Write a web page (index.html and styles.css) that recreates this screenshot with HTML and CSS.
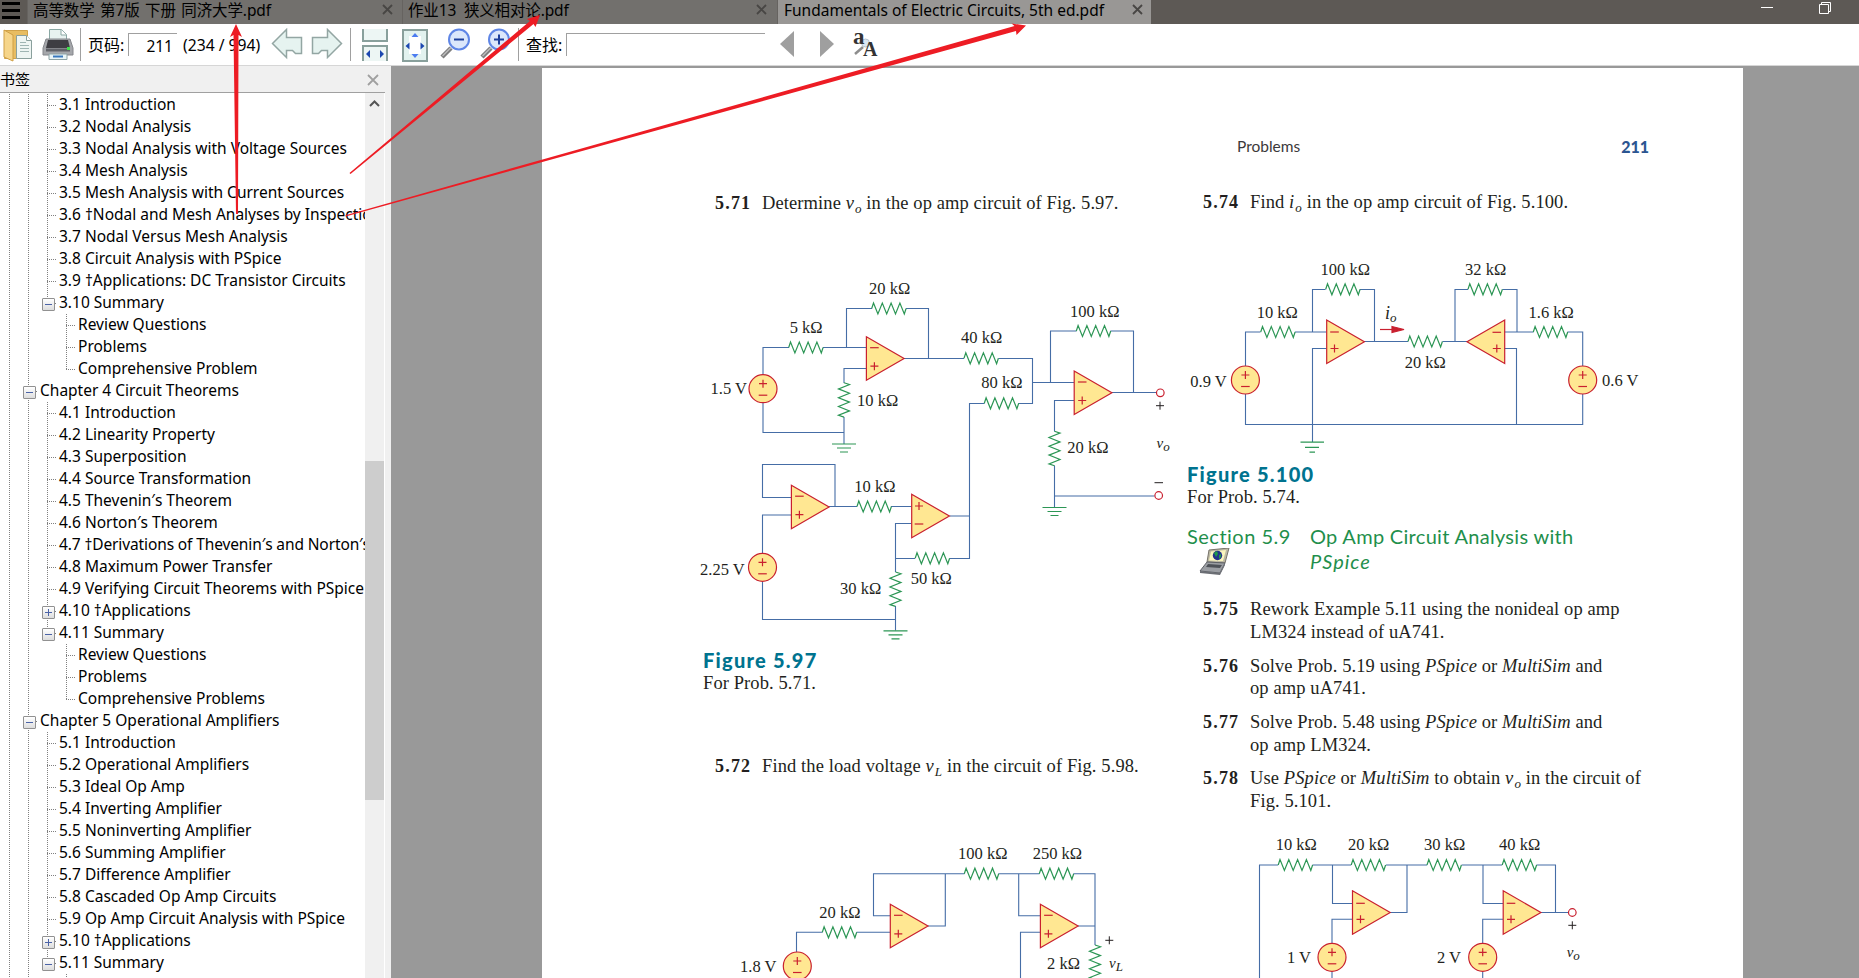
FILE: index.html
```html
<!DOCTYPE html>
<html lang="zh-CN">
<head>
<meta charset="utf-8">
<title>Fundamentals of Electric Circuits, 5th ed.pdf</title>
<link rel="stylesheet" href="styles.css">
</head>
<body>
<div class="app">
  <header class="titlebar">
    <button class="menu" aria-label="Menu"><i></i><i></i><i></i></button>
    <div class="tab tab-1"><span>高等数学 第7版 下册 同济大学.pdf</span><svg class="close" viewBox="0 0 11 11"><path d="M1 1l9 9M10 1l-9 9"/></svg></div>
    <div class="tab tab-2"><span>作业13&nbsp; 狭义相对论.pdf</span><svg class="close" viewBox="0 0 11 11"><path d="M1 1l9 9M10 1l-9 9"/></svg></div>
    <div class="tab tab-3 active"><span>Fundamentals of Electric Circuits, 5th ed.pdf</span><svg class="close" viewBox="0 0 11 11"><path d="M1 1l9 9M10 1l-9 9"/></svg></div>
    <svg class="winbtns" width="82" height="16" viewBox="0 0 82 16"><path d="M0 7.500h12M58.500 4.500h9v9h-9zM60.500 4V2.500h9v9h-2" fill="none" stroke="#fff"/></svg>
  </header>

  <div class="toolbar">
    <svg class="ic-open" width="30" height="34" viewBox="0 0 30 34">
      <path d="M1.500 2.500h23v28h-23z" fill="#e8bd62" stroke="#d0a24a"/>
      <path d="M13.500 7.500h10l5 5v18h-15z" fill="#eef5f3" stroke="#8aa09d"/><path d="M23.500 7.500v5h5" fill="#fff" stroke="#8aa09d"/>
      <path d="M17 14.500h6M17 17.500h9M17 20.500h9M17 23.500h9" stroke="#9fb5b3"/>
      <path d="M1 2l9 5v26l-9-4z" fill="#f6d58a" stroke="#cf9f45"/>
    </svg>
    <svg class="ic-print" width="32" height="34" viewBox="0 0 32 34">
      <path d="M7.500 11V1.500h12l5 5V13" fill="#e8f2f0" stroke="#8aa8a4"/><path d="M19 1.500v5.500h5.500" fill="#fff" stroke="#8aa8a4"/>
      <path d="M4 11h24l3 9v7H1v-7z" fill="#a5a7ab" stroke="#85878c"/>
      <path d="M6 12h20l2 8H4z" fill="#3e3e43"/><path d="M4 20.500h24v3H4z" fill="#606268"/><path d="M25 19h3v3h-3z" fill="#3fe04c"/>
      <path d="M7 26h18v5.500H7z" fill="#e8f5f7" stroke="#8da3a5"/><path d="M11 28.500h10" stroke="#3978bd" stroke-width="2"/>
    </svg>
    <i class="sep sep-1"></i>
    <label class="lbl lbl-page">页码:</label>
    <span class="field field-page">211</span>
    <span class="lbl lbl-total">(234 / 994)</span>
    <svg class="ic-prev" width="32" height="32" viewBox="0 0 32 32"><path d="M1.500 15.500L15.500 1.500v8h15v16h-6l-3-3h-6v7z" fill="#e6f3f0" stroke="#93a6a3" stroke-width="1.500"/></svg>
    <svg class="ic-next" width="32" height="32" viewBox="0 0 32 32"><path d="M30.500 15.500L16.500 1.500v8h-15v16h6l3-3h6v7z" fill="#e6f3f0" stroke="#93a6a3" stroke-width="1.500"/></svg>
    <i class="sep sep-2"></i>
    <svg class="ic-fitw" width="26" height="34" viewBox="0 0 26 34">
      <path d="M1 1v12h24V1M1 33V18h24v15" fill="#edf6f4" stroke="#89a09c" stroke-width="2"/>
      <path d="M4 26l4-4v8zM22 26l-4-4v8z" fill="#1c48b0"/>
    </svg>
    <svg class="ic-fitp" width="26" height="33" viewBox="0 0 26 33">
      <path d="M1 1h24v31H1z" fill="#e2f2ef" stroke="#89a09c" stroke-width="2"/><path d="M7 7h12v18H7z" fill="#fff"/>
      <path d="M13 4l3.500 4h-7zM13 29l3.500-4h-7z" fill="#4c7cf0"/><path d="M3.500 17l4-3.500v7zM22.500 17l-4-3.500v7z" fill="#1c48b0"/>
    </svg>
    <svg class="ic-zout" width="31" height="31" viewBox="0 0 31 31">
      <path d="M2 29L11 20" stroke="#7e7e7e" stroke-width="4.500"/><path d="M2.500 28L11 19.500" stroke="#bcbcbc" stroke-width="1.500"/>
      <circle cx="19" cy="11.500" r="10" fill="#dbe7fb" stroke="#5f86e6" stroke-width="2"/><path d="M14 11.500h10" stroke="#1c3f9c" stroke-width="2"/>
    </svg>
    <svg class="ic-zin" width="31" height="31" viewBox="0 0 31 31">
      <path d="M2 29L11 20" stroke="#7e7e7e" stroke-width="4.500"/><path d="M2.500 28L11 19.500" stroke="#bcbcbc" stroke-width="1.500"/>
      <circle cx="19" cy="11.500" r="10" fill="#dbe7fb" stroke="#5f86e6" stroke-width="2"/><path d="M14 11.500h10M19 6.500v10" stroke="#1c3f9c" stroke-width="2"/>
    </svg>
    <i class="sep sep-3"></i>
    <label class="lbl lbl-find">查找:</label>
    <span class="field field-find"></span>
    <svg class="ic-left" width="14" height="26" viewBox="0 0 14 26"><path d="M14 0v26L0 13z" fill="#9f9f9f"/></svg>
    <svg class="ic-right" width="14" height="26" viewBox="0 0 14 26"><path d="M0 0v26l14-13z" fill="#9f9f9f"/></svg>
    <svg class="ic-case" width="28" height="28" viewBox="0 0 28 28">
      <path d="M2 24l8-7" stroke="#8d8d8d" stroke-width="2.500"/><circle cx="12.500" cy="13" r="4" fill="#d9e6f2" stroke="#b4c3d0"/>
      <text x="0" y="14" font-size="23">a</text><text x="10" y="26" font-size="20">A</text>
    </svg>
  </div>

  <main class="body">
    <aside class="sidebar">
      <div class="side-head"><span>书签</span><svg width="12" height="12" viewBox="0 0 12 12"><path d="M1 1l10 10M11 1L1 11" stroke="#a0a0a0" stroke-width="1.800"/></svg></div>
      <div class="side-body">
        <ul class="tree">
          <li><i class="v"></i><i class="v"></i><i class="v b"></i><span>3.1 Introduction</span></li>
          <li><i class="v"></i><i class="v"></i><i class="v b"></i><span>3.2 Nodal Analysis</span></li>
          <li><i class="v"></i><i class="v"></i><i class="v b"></i><span>3.3 Nodal Analysis with Voltage Sources</span></li>
          <li><i class="v"></i><i class="v"></i><i class="v b"></i><span>3.4 Mesh Analysis</span></li>
          <li><i class="v"></i><i class="v"></i><i class="v b"></i><span>3.5 Mesh Analysis with Current Sources</span></li>
          <li><i class="v"></i><i class="v"></i><i class="v b"></i><span>3.6 †Nodal and Mesh Analyses by Inspection</span></li>
          <li><i class="v"></i><i class="v"></i><i class="v b"></i><span>3.7 Nodal Versus Mesh Analysis</span></li>
          <li><i class="v"></i><i class="v"></i><i class="v b"></i><span>3.8 Circuit Analysis with PSpice</span></li>
          <li><i class="v"></i><i class="v"></i><i class="v b"></i><span>3.9 †Applications: DC Transistor Circuits</span></li>
          <li><i class="v"></i><i class="v"></i><i class="v b end box"></i><span>3.10 Summary</span></li>
          <li><i class="v"></i><i class="v"></i><i></i><i class="v b"></i><span>Review Questions</span></li>
          <li><i class="v"></i><i class="v"></i><i></i><i class="v b"></i><span>Problems</span></li>
          <li><i class="v"></i><i class="v"></i><i></i><i class="v b end"></i><span>Comprehensive Problem</span></li>
          <li><i class="v"></i><i class="v b box"></i><span>Chapter 4 Circuit Theorems</span></li>
          <li><i class="v"></i><i class="v"></i><i class="v b"></i><span>4.1 Introduction</span></li>
          <li><i class="v"></i><i class="v"></i><i class="v b"></i><span>4.2 Linearity Property</span></li>
          <li><i class="v"></i><i class="v"></i><i class="v b"></i><span>4.3 Superposition</span></li>
          <li><i class="v"></i><i class="v"></i><i class="v b"></i><span>4.4 Source Transformation</span></li>
          <li><i class="v"></i><i class="v"></i><i class="v b"></i><span>4.5 Thevenin′s Theorem</span></li>
          <li><i class="v"></i><i class="v"></i><i class="v b"></i><span>4.6 Norton′s Theorem</span></li>
          <li class="tight"><i class="v"></i><i class="v"></i><i class="v b"></i><span>4.7 †Derivations of Thevenin′s and Norton′s</span></li>
          <li><i class="v"></i><i class="v"></i><i class="v b"></i><span>4.8 Maximum Power Transfer</span></li>
          <li><i class="v"></i><i class="v"></i><i class="v b"></i><span>4.9 Verifying Circuit Theorems with PSpice</span></li>
          <li><i class="v"></i><i class="v"></i><i class="v b box plus"></i><span>4.10 †Applications</span></li>
          <li><i class="v"></i><i class="v"></i><i class="v b end box"></i><span>4.11 Summary</span></li>
          <li><i class="v"></i><i class="v"></i><i></i><i class="v b"></i><span>Review Questions</span></li>
          <li><i class="v"></i><i class="v"></i><i></i><i class="v b"></i><span>Problems</span></li>
          <li><i class="v"></i><i class="v"></i><i></i><i class="v b end"></i><span>Comprehensive Problems</span></li>
          <li><i class="v"></i><i class="v b box"></i><span>Chapter 5 Operational Amplifiers</span></li>
          <li><i class="v"></i><i class="v"></i><i class="v b"></i><span>5.1 Introduction</span></li>
          <li><i class="v"></i><i class="v"></i><i class="v b"></i><span>5.2 Operational Amplifiers</span></li>
          <li><i class="v"></i><i class="v"></i><i class="v b"></i><span>5.3 Ideal Op Amp</span></li>
          <li><i class="v"></i><i class="v"></i><i class="v b"></i><span>5.4 Inverting Amplifier</span></li>
          <li><i class="v"></i><i class="v"></i><i class="v b"></i><span>5.5 Noninverting Amplifier</span></li>
          <li><i class="v"></i><i class="v"></i><i class="v b"></i><span>5.6 Summing Amplifier</span></li>
          <li><i class="v"></i><i class="v"></i><i class="v b"></i><span>5.7 Difference Amplifier</span></li>
          <li><i class="v"></i><i class="v"></i><i class="v b"></i><span>5.8 Cascaded Op Amp Circuits</span></li>
          <li><i class="v"></i><i class="v"></i><i class="v b"></i><span>5.9 Op Amp Circuit Analysis with PSpice</span></li>
          <li><i class="v"></i><i class="v"></i><i class="v b box plus"></i><span>5.10 †Applications</span></li>
          <li><i class="v"></i><i class="v"></i><i class="v b end box"></i><span>5.11 Summary</span></li>
          <li><i class="v"></i><i class="v"></i><i></i><i class="v"></i></li>
        </ul>
        <div class="scrollbar"><svg width="11" height="7" viewBox="0 0 11 7"><path d="M1 6l4.500-4.500L10 6" fill="none" stroke="#555" stroke-width="2"/></svg><div class="thumb"></div></div>
      </div>
    </aside>

    <section class="canvas">
      <article class="page">
        <div class="page-head"><span class="running">Problems</span><span class="folio">211</span></div>
        <div class="columns">
          <div class="col">
            <div class="prob"><b>5.71</b><p>Determine <i>v<sub>o</sub></i> in the op amp circuit of Fig. 5.97.</p></div>
            <svg class="fig" width="495" height="434" viewBox="690 214 495 434">
              <defs>
                <path id="r" d="M0 0l1.800-5.500 4.400 11 4.400-11 4.400 11 4.400-11 4.400 11 4.400-11 4.400 11 1.800-5.500"/>
                <path id="tri" d="M0 0v43.500L37.700 21.700z"/>
                <path id="plus" d="M-4 0h8M0-4v8"/>
                <path id="minus" d="M-4.300 0h8.600"/>
                <g id="src"><circle r="14"/><use href="#plus" y="-5"/><use href="#minus" y="6.500"/></g>
                <path id="gnd" d="M-12 0h24M-7 4h14M-4 8h8"/>
                <g id="amp"><use href="#tri"/><use href="#minus" x="8" y="11"/><use href="#plus" x="8" y="29.500"/></g>
              </defs>
              <g class="wire"><path d="M763 374.500v-27h26M823 347.500h43.500M846.500 347.500v-39H872M906 308.500h22.500v50M903.500 358.500h60.500M998.500 358.500h34v45h-14M984.500 403.500h-15v155h-20M866.500 368.500H844v14.500M844 417v27M763 403v29.500h81M1032.500 382.500H1074M1050.500 382.500v-51.500h26M1110.500 331h23v61.500M1111.500 392.500h45M1074 400.500h-19.500v31M1054.500 465.500V507M1054.500 496h100M829 506.500h28M891 506.500h20.500M835 506.500v-42h-72.500v33h29M791 515h-28.500v38M762.500 581.500v38H895.500M911.500 523.500h-16V572M895.500 606v24.500M895.500 558.500H915M949.500 516h20"/></g>
              <g class="res"><use href="#r" x="788.700" y="347.500"/><use href="#r" x="871.700" y="308.500"/><use href="#r" x="964" y="358.300"/><use href="#r" x="984.300" y="403.300"/><use href="#r" x="1076.300" y="331"/><use href="#r" x="857" y="506.500"/><use href="#r" x="915.200" y="558.300"/>
                <use href="#r" transform="translate(844 382.700) rotate(90)"/><use href="#r" transform="translate(1054.500 431.300) rotate(90)"/><use href="#r" transform="translate(895.500 572) rotate(90)"/>
                <use href="#gnd" x="844" y="444"/><use href="#gnd" x="1054.500" y="507.500"/><use href="#gnd" x="895.500" y="630.800"/></g>
              <g class="dev"><use href="#src" x="763" y="388.700"/><use href="#src" x="762.500" y="567.300"/><use href="#amp" x="866.400" y="336.700"/><use href="#amp" x="1074.200" y="371"/><use href="#amp" x="791.400" y="485.200"/>
                <use href="#tri" x="911.700" y="494.300"/><use href="#plus" x="919" y="506"/><use href="#minus" x="919" y="524"/>
                <circle class="term" cx="1160.300" cy="392.800" r="3.800"/><circle class="term" cx="1158.700" cy="495.500" r="3.800"/></g>
              <path class="sign" d="M1156 405.700h8M1160 401.700v8M1154.500 482.700h8.500"/>
              <g class="val"><text x="869" y="294.300">20 kΩ</text><text x="789.700" y="333.300">5 kΩ</text><text x="961" y="343">40 kΩ</text><text x="1070" y="316.700">100 kΩ</text><text x="981.300" y="388.300">80 kΩ</text><text x="857" y="405.700">10 kΩ</text><text x="1067.300" y="453.300">20 kΩ</text><text x="710.500" y="394">1.5 V</text><text x="854.300" y="491.700">10 kΩ</text><text x="700" y="575">2.25 V</text><text x="910.700" y="584">50 kΩ</text><text x="840" y="594">30 kΩ</text>
                <text class="it" x="1156.500" y="448">v<tspan class="sb" dy="3">o</tspan></text></g>
            </svg>
            <div class="cap"><h3>Figure 5.97</h3><p>For Prob. 5.71.</p></div>
            <div class="prob p72"><b>5.72</b><p>Find the load voltage <i>v<sub>L</sub></i> in the circuit of Fig. 5.98.</p></div>
            <svg class="fig" width="495" height="201" viewBox="690 777 495 201">
              <g class="wire"><path d="M890 915.700h-16.500v-42h91M998.500 873.700h41M1073.500 873.700H1095V945M928 926h17.300v-52.300M890 932.300h-33.500M822.500 932.300h-26V952M1018.700 873.700v42H1040M1040 932.300h-19.500V979M1078 926h17"/></g>
              <g class="res"><use href="#r" x="964.300" y="873.700"/><use href="#r" x="1039.300" y="873.700"/><use href="#r" x="822.300" y="932.300"/><use href="#r" transform="translate(1095 945) rotate(90)"/></g>
              <g class="dev"><use href="#src" x="797.300" y="966"/><use href="#amp" x="890.300" y="904.300"/><use href="#amp" x="1040.400" y="904.300"/></g>
              <path class="sign" d="M1105.300 940.300h8M1109.300 936.300v8"/>
              <g class="val"><text x="958" y="859.300">100 kΩ</text><text x="1032.700" y="859.300">250 kΩ</text><text x="819.300" y="918.300">20 kΩ</text><text x="740" y="972">1.8 V</text><text x="1047" y="968.700">2 kΩ</text><text class="it" x="1109" y="968">v<tspan class="sb" dy="3">L</tspan></text></g>
            </svg>
          </div>

          <div class="col right">
            <div class="prob"><b>5.74</b><p>Find <i>i<sub>o</sub></i> in the op amp circuit of Fig. 5.100.</p></div>
            <svg class="fig" width="480" height="249" viewBox="1185 213 480 249">
              <g class="wire"><path d="M1245.500 366v-34h15M1295 332h31.500M1312.500 332v-42.500h13M1360 289.500h14.500v52M1364 341.500h44M1442.500 341.500h24.500M1455 341.500v-52h13M1502.500 289.500h14.500v42.500M1504.500 332h29M1567.500 332h15.200v34M1582.700 394v30.500H1245.500V394M1504.500 348.500h12v76M1326.500 348.500h-14V442"/></g>
              <g class="res"><use href="#r" x="1260.700" y="332"/><use href="#r" x="1325.700" y="289.300"/><use href="#r" x="1408" y="341.500"/><use href="#r" x="1468" y="289.300"/><use href="#r" x="1533.300" y="332"/><path d="M1300.500 442.200h23.500M1305 447.300h14M1309.500 452.200h5.500"/></g>
              <g class="dev"><use href="#src" x="1245.400" y="380"/><use href="#src" x="1582.700" y="380"/>
                <use href="#tri" x="1326.700" y="320"/><use href="#minus" x="1334.500" y="332"/><use href="#plus" x="1334.500" y="348.500"/>
                <use href="#tri" transform="translate(1504.700 320) scale(-1 1)"/><use href="#minus" x="1496.800" y="332.300"/><use href="#plus" x="1496.800" y="348.500"/>
                <path d="M1380 329.500h14"/><path class="head" d="M1392 326.500l12 3-12 3z"/></g>
              <g class="val"><text x="1256.700" y="317.700">10 kΩ</text><text x="1320.500" y="275">100 kΩ</text><text x="1404.700" y="368">20 kΩ</text><text x="1465" y="275">32 kΩ</text><text x="1528.500" y="317.700">1.6 kΩ</text><text x="1190.300" y="387.300">0.9 V</text><text x="1602" y="386">0.6 V</text><text class="it big" x="1385" y="319">i<tspan class="sb" dy="3">o</tspan></text></g>
            </svg>
            <div class="cap"><h3>Figure 5.100</h3><p>For Prob. 5.74.</p></div>
            <div class="section">
              <div class="sec-no"><span>Section 5.9</span>
                <svg width="31" height="27" viewBox="0 0 31 27"><path d="M10 2l20-2-4 15-18-1z" fill="#bdb9a4" stroke="#77736a"/><path d="M12 3.500l15-1.500-3 11-14-.500z" fill="#fbf6bd"/><circle cx="18.500" cy="7.500" r="4.700" fill="#23328a"/><path d="M15 5l3-2 1 3-2 3zM20 7l2-1v3l-2 2z" fill="#1e9a48"/><path d="M8 14l18 1-5 10L1 23z" fill="#9b9ea3" stroke="#5e6167"/><path d="M9 16l14 1-2 3-14-1z" fill="#4e5258"/><path d="M1 23l20 2 5-10v2l-5 10-20-2z" fill="#6b6e74"/></svg>
              </div>
              <div class="sec-title">Op Amp Circuit Analysis with<br><em>PSpice</em></div>
            </div>
            <div class="prob"><b>5.75</b><p>Rework Example 5.11 using the nonideal op amp<br>LM324 instead of uA741.</p></div>
            <div class="prob"><b>5.76</b><p>Solve Prob. 5.19 using <i>PSpice</i> or <i>MultiSim</i> and<br>op amp uA741.</p></div>
            <div class="prob"><b>5.77</b><p>Solve Prob. 5.48 using <i>PSpice</i> or <i>MultiSim</i> and<br>op amp LM324.</p></div>
            <div class="prob"><b>5.78</b><p>Use <i>PSpice</i> or <i>MultiSim</i> to obtain <i>v<sub>o</sub></i> in the circuit of<br>Fig. 5.101.</p></div>
            <svg class="fig" width="480" height="166" viewBox="1185 812 480 166">
              <g class="wire"><path d="M1259.500 979V865H1278M1312.500 865H1351M1386 865h41M1461.500 865H1502M1536.500 865h19v47.500M1332.500 865v38.500h20M1390 912.500h17V865M1352 919.300h-20V943M1332 971.500v8M1483 865v38.500h20M1503 919.300h-20.300V943M1482.700 971.500v8M1540.500 912.500h27.500"/></g>
              <g class="res"><use href="#r" x="1278.200" y="865"/><use href="#r" x="1351.200" y="865"/><use href="#r" x="1427" y="865"/><use href="#r" x="1502.200" y="865"/></g>
              <g class="dev"><use href="#src" x="1332" y="957.300"/><use href="#src" x="1482.700" y="957.300"/><use href="#tri" x="1352.500" y="890.800"/><use href="#minus" x="1360.500" y="903.300"/><use href="#plus" x="1360.500" y="919.300"/><use href="#tri" x="1503.200" y="890.800"/><use href="#minus" x="1511" y="903.300"/><use href="#plus" x="1511" y="919.300"/><circle class="term" cx="1572.300" cy="912.500" r="3.800"/></g>
              <path class="sign" d="M1568.300 925.300h8M1572.300 921.300v8"/>
              <g class="val"><text x="1275.700" y="850.300">10 kΩ</text><text x="1348" y="850.300">20 kΩ</text><text x="1424" y="850.300">30 kΩ</text><text x="1499" y="850.300">40 kΩ</text><text x="1287" y="963.300">1 V</text><text x="1437" y="963.300">2 V</text><text class="it" x="1566.700" y="957">v<tspan class="sb" dy="3">o</tspan></text></g>
            </svg>
          </div>
        </div>
      </article>
    </section>
  </main>
  <svg class="arrows" width="1859" height="978" viewBox="0 0 1859 978">
    <path d="M236 24l6 13-3.500-2L238 214h-2L233.500 35l-3.500 2z"/>
    <path d="M540 15l-4.500 12-2-3L350.500 174l-1-1L530 21l-3-2z"/>
    <path d="M1026 25.500l-9.500 9.500-.500-4L345.500 216.500v-1.200L1014.500 26l-3-2.500z"/>
  </svg>
</div>
</body>
</html>
```
FILE: styles.css
```css
* { box-sizing: border-box; }
body { margin: 0; overflow: hidden; font-family: "Noto Sans", "Noto Sans CJK SC", sans-serif; color: #000; }
p, h3, ul { margin: 0; padding: 0; }
svg { display: block; flex: none; }
.app { position: relative; width: 1859px; height: 978px; display: flex; flex-direction: column; overflow: hidden; background: #fff; }

.titlebar { height: 24px; flex: none; display: flex; background: #5d5955; }
.menu { width: 27px; height: 24px; padding: 2px 0 0 2px; border: 0; background: #5d5955; display: flex; flex-direction: column; gap: 4px; }
.menu i { width: 18px; height: 3px; background: #000; }
.tab { display: flex; align-items: flex-start; justify-content: space-between; height: 24px; padding-left: 5px; border-left: 1px solid #666360; background: #72706d; font-size: 15.500px; line-height: 20px; white-space: nowrap; }
.tab-1 { width: 375px; padding-right: 9px; }
.tab-2 { width: 375px; padding-right: 10px; }
.tab-3 { width: 374px; padding-right: 8px; padding-left: 6px; }
.tab.active { background: #999795; }
.tab span { white-space: pre; }
.tab-1 span { letter-spacing: -.1px; word-spacing: 1.500px; }
.tab-2 span { letter-spacing: -.15px; }
.close { width: 11px; height: 11px; margin-top: 4px; fill: none; stroke: #484644; stroke-width: 1.800; }
.winbtns { margin-left: 610px; }

.toolbar { height: 42px; flex: none; display: flex; align-items: flex-start; background: #fff; border-bottom: 1px solid #d6d6d6; padding-left: 3px; }
.toolbar > * { flex: none; }
.ic-open { margin-top: 4px; }
.ic-print { margin: 4px 0 0 9px; }
.sep { width: 1px; height: 33px; margin-top: 4px; background: #a0a0a0; }
.sep-1 { margin-left: 6px; }
.lbl { font-size: 16px; line-height: 22px; margin-top: 10px; white-space: nowrap; }
.lbl-page { margin-left: 7px; width: 40px; }
.field { height: 23px; margin-top: 9px; border-top: 1px solid #a0a0a0; border-left: 1px solid #a0a0a0; font-size: 15.500px; line-height: 24px; }
.field-page { width: 49px; text-align: right; padding-right: 4px; }
.lbl-total { margin-left: 6px; width: 77px; font-size: 15.700px; }
.ic-prev { margin: 4px 0 0 11px; }
.ic-next { margin: 4px 0 0 8px; }
.sep-2 { margin-left: 7px; }
.ic-fitw { margin: 4px 0 0 11px; }
.ic-fitp { margin: 5px 0 0 14px; }
.ic-zout { margin: 4px 0 0 12px; }
.ic-zin { margin: 4px 0 0 9px; }
.sep-3 { margin-left: 7px; }
.lbl-find { margin-left: 7px; width: 40px; }
.field-find { width: 199px; }
.ic-left { margin: 7px 0 0 15px; }
.ic-right { margin: 7px 0 0 26px; }
.ic-case { margin: 6px 0 0 19px; overflow: visible; font-family: "Liberation Serif", serif; font-weight: bold; fill: #333; }

.body { flex: 1; display: flex; min-height: 0; }
.sidebar { width: 391px; flex: none; display: flex; flex-direction: column; background: #f0f0f0; padding-right: 6px; }
.side-head { height: 27px; flex: none; display: flex; justify-content: space-between; padding: 8px 6px 0 0; border-bottom: 1px solid #a0a0a0; font-size: 15px; line-height: 10px; }
.side-body { flex: 1; min-height: 0; display: flex; background: #fff; }
.tree { width: 365px; padding: 1px 1px 0 0; list-style: none; overflow: hidden; }
.tree li { display: flex; height: 22px; font-size: 15.500px; line-height: 20px; white-space: nowrap; }
.tree .tight { letter-spacing: -.12px; }
.tree i { position: relative; flex: none; width: 19px; height: 22px; }
.tree span { margin-left: 2px; }
.tree .v { background: repeating-linear-gradient(#808080 0 1px, transparent 1px 2px) 9px 0 / 1px 100% no-repeat; }
.tree .b { background: repeating-linear-gradient(#808080 0 1px, transparent 1px 2px) 9px 0 / 1px 100% no-repeat, repeating-linear-gradient(90deg, #808080 0 1px, transparent 1px 2px) 9px 11px / 10px 1px no-repeat; }
.tree .end { background-size: 1px 12px, 10px 1px; }
.tree .box::after { content: ""; position: absolute; left: 4px; top: 6px; width: 11px; height: 11px; border: 1px solid #919191; border-radius: 1px; background: linear-gradient(#4b63a7, #4b63a7) center / 7px 1px no-repeat, linear-gradient(#fff, #ddd); }
.tree .plus::after { background: linear-gradient(#4b63a7, #4b63a7) center / 7px 1px no-repeat, linear-gradient(#4b63a7, #4b63a7) center / 1px 7px no-repeat, linear-gradient(#fff, #ddd); }
.scrollbar { width: 19px; background: #f0f0f0; padding-top: 7px; display: flex; flex-direction: column; align-items: center; }
.thumb { width: 19px; height: 339px; margin-top: 354px; background: #cdcdcd; }

.canvas { flex: 1; background: #999; padding: 2px 0 0 151px; }
.page { width: 1201px; height: 910px; background: #fff; overflow: hidden; padding: 66px 0 0 148px; color: #231f20; }
.page-head { height: 24px; width: 959px; display: flex; justify-content: space-between; align-items: center; font-family: Lato, sans-serif; font-size: 16px; padding: 0 0 0 547px; }
.folio { color: #2b5591; font-weight: 900; }
.running { font-size: 15.500px; color: #3c393a; }
.columns { display: grid; grid-template-columns: 495px 480px; align-items: start; margin-top: 34px; font-family: "Liberation Serif", serif; font-size: 18.500px; line-height: 22.800px; letter-spacing: .1px; }
.right { margin-top: -1px; }
.prob { display: flex; padding-left: 25px; white-space: nowrap; margin-bottom: 10.800px; }
.right .prob { padding-left: 18px; }
.prob b { width: 47px; font-size: 18px; letter-spacing: 1.200px; }
.prob sub, .val .sb { font-size: 13px; line-height: 0; }
.prob sub { vertical-align: -4px; margin-left: 1px; }
.fig { overflow: hidden; margin-top: -11.800px; }
.cap { padding: 1px 0 0 13px; height: 45px; line-height: 22px; }
.right .cap { padding-left: 2px; }
.cap h3 { font: 900 20px/23px Lato, sans-serif; color: #00738f; letter-spacing: 1.250px; }
.p72 { margin-top: 62px; }
.section { display: flex; margin: 17px 0 25px; padding-left: 2px; height: 49.400px; font: 20px/24.700px Lato, sans-serif; color: #1f8f4c; letter-spacing: .300px; white-space: nowrap; }
.sec-no { width: 123px; letter-spacing: .500px; }
.sec-no svg { margin: -1px 0 0 12px; }
.sec-title em { letter-spacing: 1px; }
.wire { fill: none; stroke: #456da6; stroke-width: 1.100; }
.res { fill: none; stroke: #2c9655; stroke-width: 1.200; }
.dev { fill: #ffe792; stroke: #c9202f; stroke-width: 1.200; }
.dev .term { fill: #fff; }
.dev .head { fill: #c9202f; }
.sign { fill: none; stroke: #231f20; }
.val { font-family: "Liberation Serif", serif; font-size: 16.500px; letter-spacing: 0; fill: #231f20; }
.val .it { font-style: italic; font-size: 15px; }
.val .big { font-size: 18px; }
.arrows { position: absolute; left: 0; top: 0; fill: #ed1c24; pointer-events: none; }
```
